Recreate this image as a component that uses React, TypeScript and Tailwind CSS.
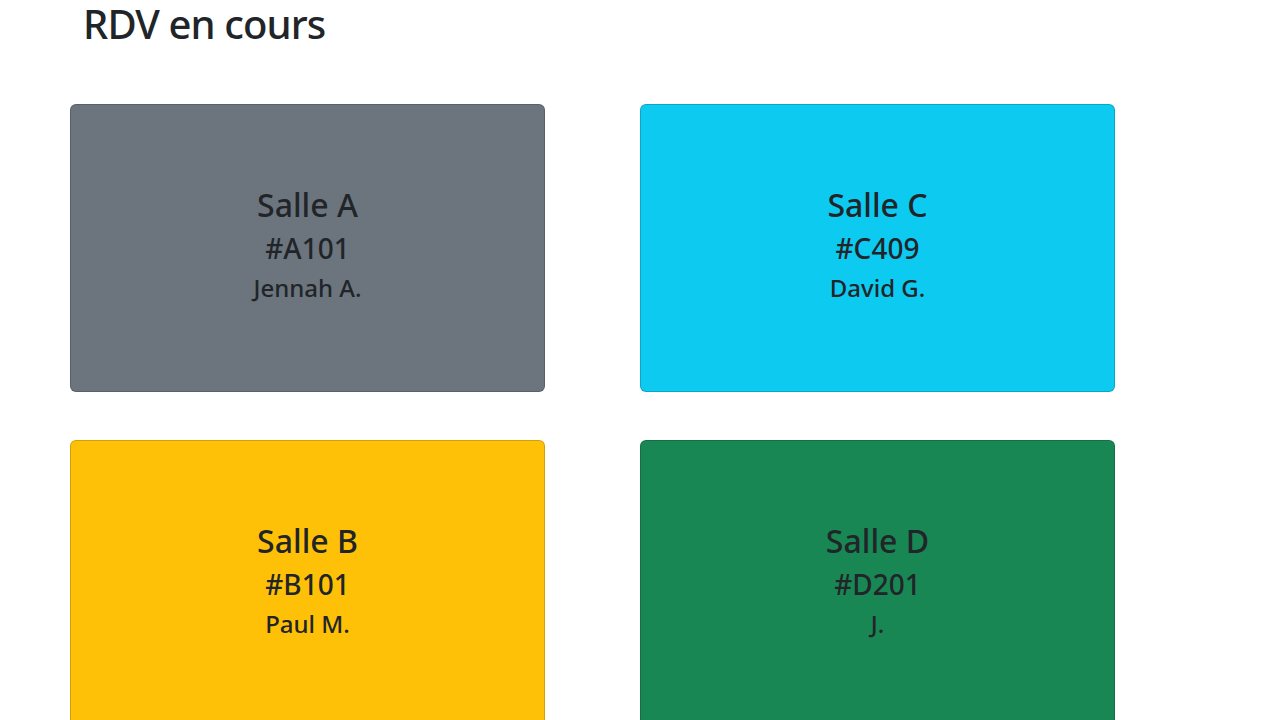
const rooms = [
  { name: "Salle A", code: "#A101", who: "Jennah A.", bg: "bg-[#6c757d]" },
  { name: "Salle C", code: "#C409", who: "David G.", bg: "bg-[#0dcaf0]" },
  { name: "Salle B", code: "#B101", who: "Paul M.", bg: "bg-[#ffc107]" },
  { name: "Salle D", code: "#D201", who: "J.", bg: "bg-[#198754]" },
];

function RoomCard({ name, code, who, bg }: (typeof rooms)[number]) {
  return (
    <div
      className={`${bg} h-[288px] w-[475px] rounded-[6px] border border-[rgba(0,0,0,0.175)] flex flex-col items-center justify-center text-[#212529]`}
    >
      <h2 className="mb-2 text-[32px] leading-[38.4px] font-medium">{name}</h2>
      <h3 className="mb-2 text-[28px] leading-[33.6px] font-medium">{code}</h3>
      <h4 className="mb-2 text-[24px] leading-[28.8px] font-medium">{who}</h4>
    </div>
  );
}

export default function App() {
  return (
    <div
      className="min-h-screen bg-white text-[#212529]"
      style={{ fontFamily: '"Noto Sans", "Open Sans", sans-serif' }}
    >
      <h1 className="pl-[83px] text-[40px] leading-[48px] font-medium tracking-[-0.9px]">RDV en cours</h1>
      <div className="mt-[56px] pl-[70px] grid grid-cols-[475px_475px] gap-x-[95px] gap-y-[48px]">
        {rooms.map((r) => (
          <RoomCard key={r.code} {...r} />
        ))}
      </div>
    </div>
  );
}
